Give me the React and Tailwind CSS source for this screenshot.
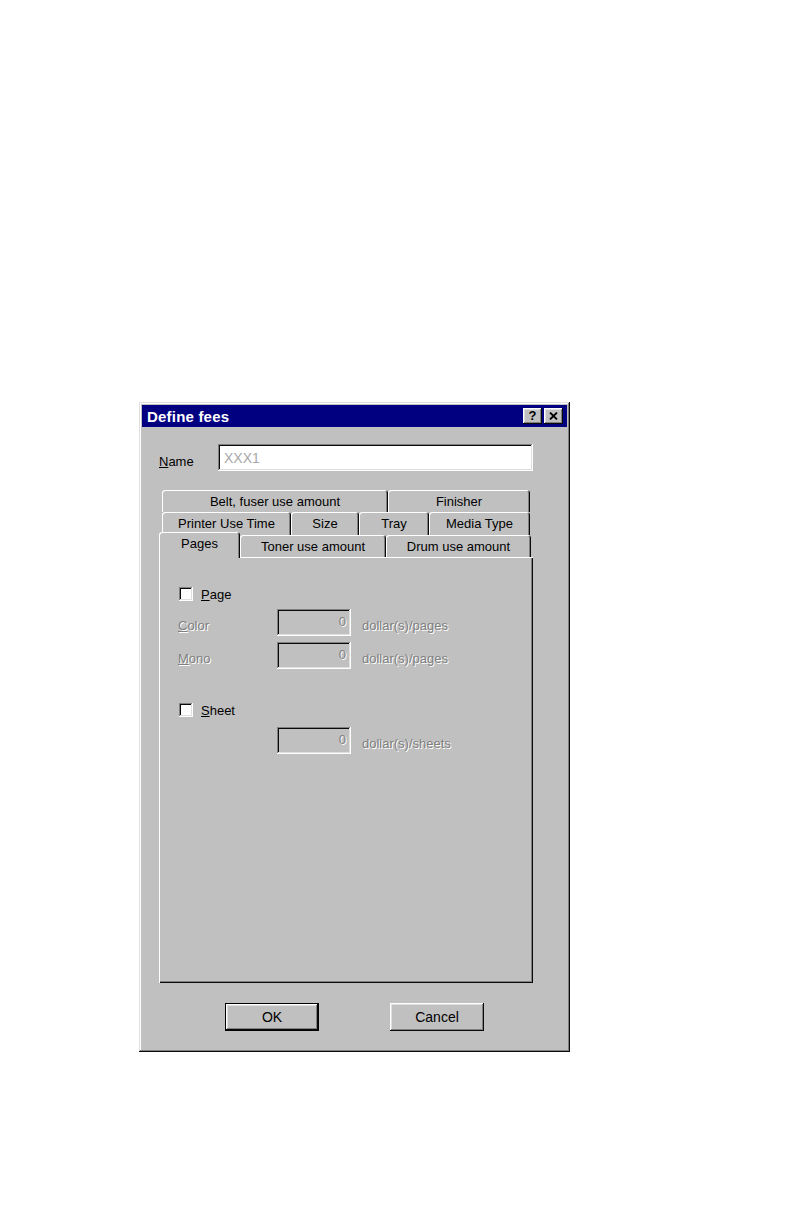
import React from "react";

const WIN = "shadow-[inset_-1px_-1px_#0a0a0a,inset_1px_1px_#dfdfdf,inset_-2px_-2px_#808080,inset_2px_2px_#ffffff]";
const BTN = "shadow-[inset_-1px_-1px_#0a0a0a,inset_1px_1px_#ffffff,inset_-2px_-2px_#808080,inset_2px_2px_#dfdfdf]";
const FIELD = "shadow-[inset_-1px_-1px_#ffffff,inset_1px_1px_#808080,inset_-2px_-2px_#dfdfdf,inset_2px_2px_#0a0a0a]";
const TAB = "shadow-[inset_1px_1px_#ffffff,inset_-1px_0_#0a0a0a,inset_-2px_0_#808080]";
const PANEL = "shadow-[inset_1px_1px_#ffffff,inset_-1px_-1px_#0a0a0a,inset_-2px_-2px_#808080]";
const DIS = "text-[#808080] [text-shadow:1px_1px_0_#ffffff]";

function Tab({ w, label, h = "h-[22px]" }) {
  return (
    <div
      style={{ width: w }}
      className={`${h} ${TAB} rounded-t-[3px] bg-[#c0c0c0] flex items-center justify-center shrink-0`}
    >
      {label}
    </div>
  );
}

function Checkbox() {
  return <div className={`w-[14px] h-[14px] bg-white ${FIELD} shrink-0`} />;
}

function DisabledField() {
  return (
    <div className={`w-[74px] h-[27px] ${FIELD} bg-[#c0c0c0] flex items-center justify-end pr-[5px] pb-[3px] ${DIS}`}>
      0
    </div>
  );
}

export default function App() {
  return (
    <div className="min-h-[1224px] w-[792px] bg-white pt-[402px] pl-[139px] font-['Liberation_Sans',Arial,sans-serif] text-[13px] text-black leading-none">
      <div className={`w-[431px] h-[650px] p-[3px] bg-[#c0c0c0] ${WIN} flex flex-col`}>
        {/* Title bar */}
        <div className="h-[22px] bg-[#000080] flex items-center justify-between pl-[5px] pr-[4px]">
          <span className="text-white font-bold text-[15px] tracking-[0.2px]">Define fees</span>
          <div className="flex gap-[2px]">
            <div className={`w-[19px] h-[16px] bg-[#c0c0c0] ${BTN} flex items-center justify-center font-bold text-[13px] pb-[1px]`}>
              ?
            </div>
            <div className={`w-[19px] h-[16px] bg-[#c0c0c0] ${BTN} flex items-center justify-center pb-[1px]`}>
              <svg width="9" height="8" viewBox="0 0 9 8">
                <path d="M1 0.5 L8 7.5 M8 0.5 L1 7.5" stroke="#000" strokeWidth="1.8" />
              </svg>
            </div>
          </div>
        </div>

        <div className="pl-[17px] flex flex-col">
          {/* Name row */}
          <div className="mt-[17px] h-[27px] flex items-center">
            <span className="w-[59px] pt-[8px]">
              <u>N</u>ame
            </span>
            <div className={`w-[315px] h-[27px] bg-white ${FIELD} flex items-center pl-[6px] text-[#a8a8a8] text-[14px]`}>
              XXX1
            </div>
          </div>

          {/* Tabs */}
          <div className="mt-[19px] flex flex-col">
            <div className="flex ml-[3px] h-[22px]">
              <Tab w={226} label="Belt, fuser use amount" />
              <Tab w={142} label="Finisher" />
            </div>
            <div className="flex ml-[3px] h-[23px] relative">
              <Tab w={129} label="Printer Use Time" h="h-[23px]" />
              <Tab w={68} label="Size" h="h-[23px]" />
              <Tab w={70} label="Tray" h="h-[23px]" />
              <Tab w={101} label="Media Type" h="h-[23px]" />
            </div>
            <div className="flex items-end h-[25px] -mt-[3px] relative z-10">
              <div className={`w-[81px] h-[26px] -mb-[1px] ${TAB} rounded-t-[3px] bg-[#c0c0c0] flex items-center justify-center pb-[3px] shrink-0`}>
                Pages
              </div>
              <Tab w={146} label="Toner use amount" />
              <Tab w={145} label="Drum use amount" />
            </div>
          </div>

          {/* Panel */}
          <div className={`w-[374px] h-[426px] ${PANEL} bg-[#c0c0c0] pt-[30px] flex flex-col`}>
            <div className="flex items-center h-[14px] pl-[20px]">
              <Checkbox />
              <span className="ml-[8px]">
                <u>P</u>age
              </span>
            </div>
            <div className="mt-[8px] flex items-start pl-[19px]">
              <span className={`w-[99px] pt-[10px] ${DIS}`}>
                <u>C</u>olor
              </span>
              <DisabledField />
              <span className={`ml-[11px] pt-[10px] ${DIS}`}>dollar(s)/pages</span>
            </div>
            <div className="mt-[6px] flex items-start pl-[19px]">
              <span className={`w-[99px] pt-[10px] ${DIS}`}>
                <u>M</u>ono
              </span>
              <DisabledField />
              <span className={`ml-[11px] pt-[10px] ${DIS}`}>dollar(s)/pages</span>
            </div>
            <div className="mt-[34px] flex items-center h-[14px] pl-[20px]">
              <Checkbox />
              <span className="ml-[8px]">
                <u>S</u>heet
              </span>
            </div>
            <div className="mt-[10px] flex items-start pl-[118px]">
              <DisabledField />
              <span className={`ml-[11px] pt-[10px] ${DIS}`}>dollar(s)/sheets</span>
            </div>
          </div>

          {/* Buttons */}
          <div className="mt-[20px] flex pl-[66px] gap-[71px]">
            <div className="w-[94px] h-[28px] border border-black">
              <div className={`w-full h-full bg-[#c0c0c0] ${BTN} flex items-center justify-center text-[14px]`}>
                OK
              </div>
            </div>
            <div className={`w-[94px] h-[28px] bg-[#c0c0c0] ${BTN} flex items-center justify-center text-[14px]`}>
              Cancel
            </div>
          </div>
        </div>
      </div>
    </div>
  );
}
